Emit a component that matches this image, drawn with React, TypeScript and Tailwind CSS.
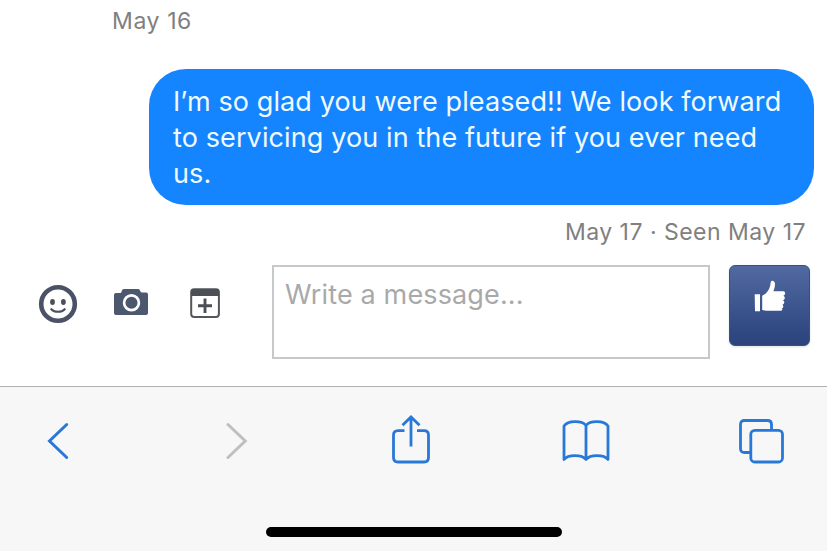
const lines = [
    "I’m so glad you were pleased!! We look forward",
    "to servicing you in the future if you ever need",
    "us.",
];

function SmileIcon() {
    return (
        <svg width="40" height="40" viewBox="0 0 40 40" fill="none">
            <circle cx="20" cy="20" r="16.8" stroke="#4b5266" strokeWidth="4.6" />
            <ellipse cx="14.5" cy="18" rx="2.4" ry="2.9" fill="#4b4f56" />
            <ellipse cx="25.4" cy="18" rx="2.4" ry="2.9" fill="#4b4f56" />
            <path d="M13.3 25.2C16.5 28.6 23.5 28.6 26.7 25.2" stroke="#4b4f56" strokeWidth="2.2" strokeLinecap="round" />
        </svg>
    );
}

function CameraIcon() {
    return (
        <svg width="34" height="26" viewBox="0 0 34 26" fill="none">
            <path d="M2 4H6.500Q7.500 3.800 7.700 2Q8.200 0 10 0H24Q25.800 0 26.300 2Q26.700 3.500 28 3.500H32Q34 3.500 34 5.500V24Q34 26 32 26H2Q0 26 0 24V6Q0 4 2 4Z" fill="#4b586e" />
            <circle cx="17.5" cy="13.7" r="7.4" fill="#4b586e" stroke="#fff" strokeWidth="2.7" />
        </svg>
    );
}

function AddBoxIcon() {
    return (
        <svg width="30" height="30" viewBox="0 0 30 30" fill="none">
            <rect x="1.200" y="1.200" width="27.700" height="27.700" rx="3" stroke="#55565b" strokeWidth="2" />
            <path d="M1 8V3.500Q1 1 3.500 1H26.500Q29 1 29 3.500V8Z" fill="#4b4f56" />
            <path d="M15 10.500V25M8 17.800H22" stroke="#4b4f56" strokeWidth="2.900" />
        </svg>
    );
}

function LikeIcon() {
    return (
        <svg width="32" height="32" viewBox="0 0 32 32" fill="#fff">
            <path d="M.7 14.300H6V31.300H1Z" />
            <path d="M8.200 15.700L11.500 13.800C14.500 10.800 16.300 7.500 16.700 2.500C17.300 -.5 21.200 .5 21 4.500C21 7 20 9.500 19.400 11.300H29.500C32 12 31.500 15 29.300 15.600C31.500 17 31.200 19.700 29 20.200C31 21.300 30.500 24.200 28.500 24.700C29.900 26.200 29.300 28.200 27.700 28.500C28.900 29.500 28.200 30.800 26.500 30.800H12L8.200 29.900Z" />
        </svg>
    );
}

function BackIcon() {
    return (
        <svg width="22" height="38" viewBox="0 0 22 38" fill="none" stroke="#2878d8" strokeWidth="3" strokeLinecap="round">
            <path d="M19.700 2.500L2.500 19L19.700 35.500" />
        </svg>
    );
}

function ForwardIcon() {
    return (
        <svg width="22" height="38" viewBox="0 0 22 38" fill="none" stroke="#bfbfbf" strokeWidth="3" strokeLinecap="round">
            <path d="M2 2.500L19.200 19L2 35.500" />
        </svg>
    );
}

function ShareIcon() {
    return (
        <svg width="38" height="49" viewBox="0 0 38 49" fill="none" stroke="#2878d8" strokeWidth="2.800">
            <path d="M12.500 15.700H6Q1.500 15.700 1.500 20.200V42.500Q1.500 47 6 47H32Q36.500 47 36.500 42.500V20.200Q36.500 15.700 32 15.700H25" />
            <path d="M19 31.500V2M10.500 10.300L19 2L27.500 10.300" />
        </svg>
    );
}

function BookIcon() {
    return (
        <svg width="48" height="42" viewBox="0 0 48 42" fill="none" stroke="#2878d8" strokeWidth="2.800" strokeLinejoin="round">
            <path d="M24 5.500C20 .3 6 .3 2 6V39.500C6 34.300 20 34.300 24 39.500C28 34.300 42 34.300 46 39.500V6C42 .3 28 .3 24 5.500V39.500" />
        </svg>
    );
}

function TabsIcon() {
    return (
        <svg width="46" height="45" viewBox="0 0 46 45" fill="none" stroke="#2878d8" strokeWidth="2.800">
            <path d="M12 33.500H6.500Q2.500 33.500 2.500 29.500V5.500Q2.500 1.500 6.500 1.500H29.500Q33.500 1.500 33.500 5.500V11" />
            <rect x="12.800" y="11.300" width="31.700" height="31.700" rx="4" />
        </svg>
    );
}

export default function App() {
    return (
        <div className="flex h-[551px] w-[827px] flex-col overflow-hidden bg-white font-[Inter,sans-serif]">
            <div className="h-[69px] pl-[112px] pt-[5px] text-[23px] leading-8 tracking-[0.6px] text-[#808080]">May 16</div>
            <div className="ml-[149px] h-[136px] w-[665px] rounded-[37px] bg-[#1484ff] pl-6 pt-[15px] text-[27px] leading-9 tracking-[0.11px] text-[#f0fbff]">
                {lines.map((line) => (
                    <p key={line} className="whitespace-nowrap">{line}</p>
                ))}
            </div>
            <div className="flex h-[60px] justify-end pr-[21px] pt-[11px] text-[23px] leading-8 tracking-[0.48px] text-[#808080]">May 17 · Seen May 17</div>
            <div className="flex h-[121px] shrink-0 items-start pl-[38px]">
                <button className="mt-[19px]"><SmileIcon /></button>
                <button className="ml-9 mt-6"><CameraIcon /></button>
                <button className="ml-[42px] mt-[23px]"><AddBoxIcon /></button>
                <textarea
                    className="ml-[52px] h-[94px] w-[438px] resize-none border-2 border-[#c8c8c8] bg-white px-[11px] py-[10px] text-[27px] leading-9 tracking-[0.14px] outline-none placeholder:text-[#a9a9a9]"
                    placeholder="Write a message..."
                />
                <button className="ml-[19px] flex h-[81px] w-[81px] justify-center rounded-md border border-[#35508a] bg-linear-to-b from-[#5269a1] to-[#2a437c] pt-[14px] shadow-sm">
                    <LikeIcon />
                </button>
            </div>
            <nav className="flex h-[165px] flex-col items-center border-t border-[#b0b0b0] bg-[#f7f7f7]">
                <div className="flex h-[140px] w-full items-start pl-[47px]">
                    <button className="mt-[35px]"><BackIcon /></button>
                    <button className="ml-[157px] mt-[35px]"><ForwardIcon /></button>
                    <button className="ml-[144px] mt-7"><ShareIcon /></button>
                    <button className="ml-[132px] mt-[33px]"><BookIcon /></button>
                    <button className="ml-[128px] mt-8"><TabsIcon /></button>
                </div>
                <div className="h-[10px] w-[296px] rounded-full bg-black" />
            </nav>
        </div>
    );
}
